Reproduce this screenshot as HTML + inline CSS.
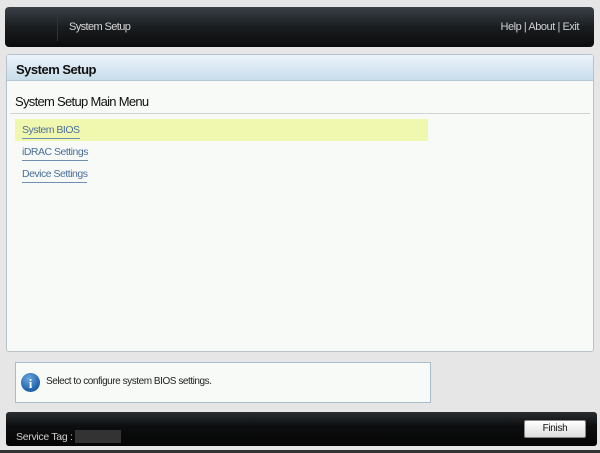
<!DOCTYPE html>
<html><head><style>
*{margin:0;padding:0;box-sizing:border-box}
body{width:600px;height:453px;background:#e6e6e6;position:relative;overflow:hidden;font-family:"Liberation Sans",sans-serif}
.hdr{position:absolute;left:5px;top:7px;width:589px;height:40px;border-radius:4px;background:linear-gradient(#3a4147,#1a1d20 50%,#0a0b0c);}
.hdr .sep{position:absolute;left:52px;top:8px;width:1px;height:26px;background:#333}
.hdr .t{position:absolute;left:64px;top:14px;color:#d8d8d8;font-size:11px;letter-spacing:-0.6px}
.hdr .r{position:absolute;right:15px;top:14px;color:#d0d0d0;font-size:11px;letter-spacing:-0.45px}
.panel{position:absolute;left:6px;top:54px;width:588px;height:298px;background:#f7faf7;border:1px solid #b8c2c8;border-radius:3px}
.tb{height:26px;background:linear-gradient(#eaf3fa,#c9ddeb);border-bottom:1px solid #b6c8d6;font-weight:bold;font-size:13px;padding:7px 0 0 9px;color:#111;letter-spacing:-0.5px}
.mm{position:absolute;left:8px;top:39px;font-size:13px;color:#111;letter-spacing:-0.7px}
.hr{position:absolute;left:3px;right:3px;top:58px;height:1px;background:#d0d4d4}
.hl{position:absolute;left:8px;top:64px;width:413px;height:22px;background:#f0f7ae}
.it{position:absolute;left:15px;font-size:10.5px;color:#4a6f9c;border-bottom:1px solid #6f90b5;padding-bottom:2px;letter-spacing:-0.5px}
.info{position:absolute;left:15px;top:362px;width:416px;height:41px;background:#f7faf7;border:1px solid #a9bccb}
.ic{position:absolute;left:5px;top:10px;width:19px;height:19px;border-radius:50%;background:radial-gradient(circle at 40% 30%,#6aa7e0,#1b5fa8 70%);color:#fff;font-weight:bold;font-size:13px;text-align:center;line-height:21px;font-family:"Liberation Serif",serif}
.info .m{position:absolute;left:30px;top:13px;font-size:10px;color:#222;letter-spacing:-0.45px}
.ftr{position:absolute;left:6px;top:412px;width:591px;height:34px;border-radius:3px;background:linear-gradient(#2a2e31,#0d0e0f 40%,#050505)}
.ftr .s{position:absolute;left:10px;top:19px;color:#cfcfcf;font-size:10.5px;letter-spacing:-0.3px}
.ftr .b{position:absolute;left:69px;top:18px;width:46px;height:13px;background:#333}
.fin{position:absolute;left:518px;top:8px;width:62px;height:18px;border-radius:2px;background:linear-gradient(#fff,#dcdcdc);border:1px solid #888;font-size:10px;text-align:center;line-height:16px;color:#111;letter-spacing:-0.3px}
.bot{position:absolute;left:0;top:450px;width:600px;height:3px;background:#333}
</style></head><body>
<div class="hdr"><div class="sep"></div><div class="t">System Setup</div><div class="r">Help | About | Exit</div></div>
<div class="panel">
<div class="tb">System Setup</div>
<div class="mm">System Setup Main Menu</div>
<div class="hr"></div>
<div class="hl"></div>
<div class="it" style="top:69px">System BIOS</div>
<div class="it" style="top:91px">iDRAC Settings</div>
<div class="it" style="top:113px">Device Settings</div>
</div>
<div class="info"><div class="ic">i</div><div class="m">Select to configure system BIOS settings.</div></div>
<div class="ftr"><div class="s">Service Tag :</div><div class="b"></div><div class="fin">Finish</div></div>
<div class="bot"></div>
</body></html>
